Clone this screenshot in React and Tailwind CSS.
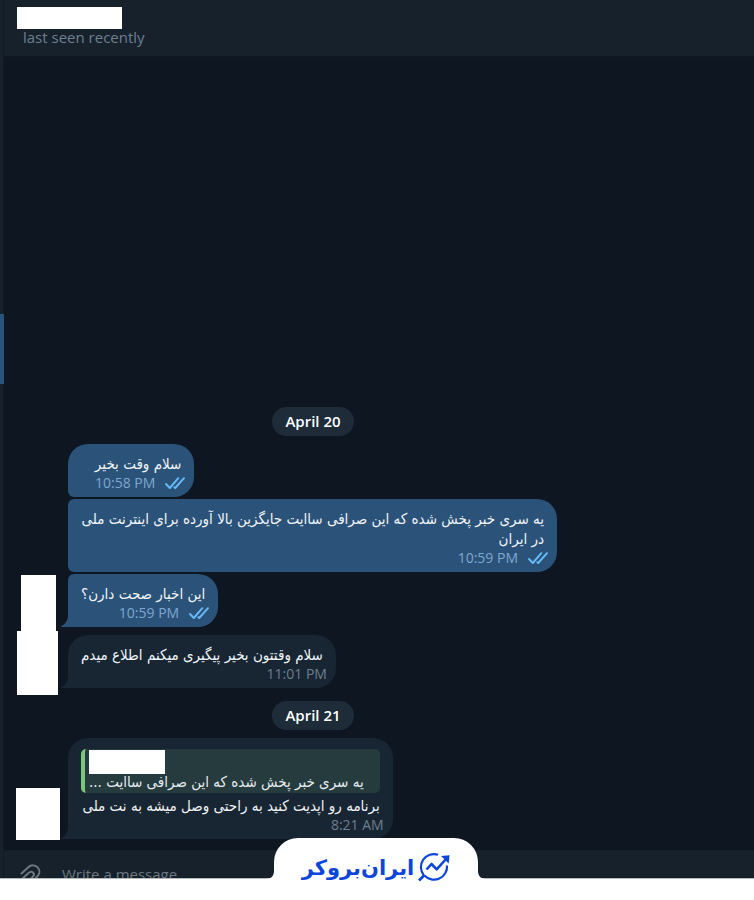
import clsx from 'clsx';

const THREAD = [
  { type: 'date', label: 'April 20', gap: 'mt-0' },
  { type: 'message', own: true, text: 'سلام وقت بخیر', time: '10:58 PM', first: true, gap: 'mt-2' },
  {
    type: 'message',
    own: true,
    text: 'یه سری خبر پخش شده که این صرافی ساایت جایگزین بالا آورده برای اینترنت ملی در ایران',
    time: '10:59 PM',
    gap: 'mt-[2px]',
  },
  {
    type: 'message',
    own: true,
    text: 'این اخبار صحت دارن؟',
    time: '10:59 PM',
    last: true,
    gap: 'mt-[2px]',
    avatar: 'left-[17px] top-[1px] w-[35px] h-14',
  },
  {
    type: 'message',
    text: 'سلام وقتتون بخیر پیگیری میکنم اطلاع میدم',
    time: '11:01 PM',
    first: true,
    last: true,
    gap: 'mt-2',
    avatar: 'left-[13px] -top-1 w-[41px] h-16',
  },
  { type: 'date', label: 'April 21', gap: 'mt-[13px]' },
  {
    type: 'message',
    reply: 'یه سری خبر پخش شده که این صرافی ساایت ...',
    text: 'برنامه رو اپدیت کنید به راحتی وصل میشه به نت ملی',
    time: '8:21 AM',
    first: true,
    last: true,
    gap: 'mt-2',
    avatar: 'left-3 top-[50px] w-11 h-[52px]',
  },
];

export default function App() {
  return (
    <div className="flex flex-col min-h-screen bg-[#0e1621] font-['Open_Sans','DejaVu_Sans',sans-serif] text-[15px]">
      <div className="flex flex-1">
        <ChatListEdge />
        <div className="flex-1 flex flex-col min-w-0">
          <Header />
          <main className="flex-1 flex flex-col justify-end pb-[11px]">
            <div className="w-full max-w-[618px]">
              {THREAD.map((item, i) =>
                item.type === 'date' ? <DateChip key={i} {...item} /> : <Message key={i} {...item} />
              )}
            </div>
          </main>
          <Composer />
        </div>
      </div>
      <BrandFooter />
    </div>
  );
}

// Visible sliver of the chat list, with the active chat highlighted
function ChatListEdge() {
  return (
    <div className="w-1 bg-[#17212b] border-r border-[#101a24]">
      <div className="h-[70px] mt-[314px] w-1 bg-[#2b5278]" />
    </div>
  );
}

function Header() {
  return (
    <header className="h-[57px] bg-[#17212b] pl-[13px] pt-[7px] border-b border-[#101922]">
      <div className="w-[105px] h-[22px] bg-white" />
      <p className="pl-[6px] leading-4 text-[#6d7f8f]">last seen recently</p>
    </header>
  );
}

function DateChip({ label, gap }) {
  return (
    <div className={clsx('flex justify-center', gap)}>
      <span className="rounded-full bg-[#1e2c3a] px-[13px] h-[29px] leading-[28px] font-semibold text-white">
        {label}
      </span>
    </div>
  );
}

function Message({ own, text, time, reply, first, last, gap, avatar }) {
  return (
    <div className={clsx('relative flex pl-16', gap)}>
      {avatar && <div className={clsx('absolute z-10 bg-white', avatar)} />}
      <div
        className={clsx(
          'relative max-w-[489px] pt-[10px] pb-[5px] rounded-r-[20px]',
          own ? 'bg-[#2b5278]' : 'bg-[#182533]',
          first ? 'rounded-tl-[20px]' : 'rounded-tl-[6px]',
          !last && 'rounded-bl-[6px]'
        )}
      >
        {last && <Tail className={own ? 'text-[#2b5278]' : 'text-[#182533]'} />}
        {reply && (
          <div className="mx-[13px] mt-[1px] mb-[3px] h-11 rounded-[5px] bg-[#263b3e] border-l-4 border-[#7bc87a] pl-1">
            <div className="w-[76px] h-6 translate-y-[1px] bg-white" />
            <p dir="rtl" className="pr-4 font-['DejaVu_Sans_Condensed','DejaVu_Sans',sans-serif] text-[15px]/[18px] text-[#e4ecf2] whitespace-nowrap">{reply}</p>
          </div>
        )}
        <p dir="rtl" className="px-[13px] font-['DejaVu_Sans_Condensed','DejaVu_Sans',sans-serif] text-[15px]/5 text-[#f0f4f8]">{text}</p>
        <div className="flex items-center justify-end gap-[10px] text-sm/[18px] pr-[9px] pl-[27px]">
          <time className={own ? 'text-[#7da8d3]' : 'text-[#6d7f8f]'}>{time}</time>
          {own && <ReadTicks />}
        </div>
      </div>
    </div>
  );
}

function Tail({ className }) {
  return (
    <svg className={clsx('absolute bottom-0 -left-[7px]', className)} width="8" height="14" viewBox="0 0 8 14" aria-hidden="true">
      <path d="M8 0H7v2C7 7.500 4 11.500.400 13c-.600.400-.300 1 .500 1H8z" fill="currentColor" />
    </svg>
  );
}

function ReadTicks() {
  return (
    <svg width="20" height="12" viewBox="0 0 20 12" fill="none" stroke="#65b9f4" strokeWidth="2" strokeLinecap="round" strokeLinejoin="round" aria-hidden="true">
      <path d="M1 7l3.800 4L13.300 1.200" />
      <path d="M9.300 10.300l.9.700L19 1.200" />
    </svg>
  );
}

function Composer() {
  return (
    <div className="h-7 overflow-hidden bg-[#17212b] border-t border-[#141e27]">
      <div className="flex items-start pl-3 pt-[13px]">
        <button type="button" aria-label="Attach" className="text-[#6d7883]">
          <svg width="26" height="24" viewBox="0 0 26 24" fill="none" stroke="currentColor" strokeWidth="2" strokeLinecap="round" aria-hidden="true">
            <path d="M5.500 9.500L12 3.400c3-2.800 7-2.600 9.600 0 2.600 2.700 2.300 6.400-.3 9L13 20.500M5.500 15.500L12.500 9c1.700-1.500 3.500-1.500 4.600-.3 1.200 1.300.8 3-.4 4.200L9 20" />
          </svg>
        </button>
        <input
          type="text"
          aria-label="Write a message"
          placeholder="Write a message..."
          className="flex-1 min-w-0 ml-5 h-5 bg-transparent outline-none text-white placeholder:text-[#6d7883]"
        />
      </div>
    </div>
  );
}

function BrandFooter() {
  return (
    <footer className="relative h-[22px] bg-white border-t border-[#b5babd]">
      <div className="absolute z-20 bottom-0 left-[274px] w-[204px] h-[62px] rounded-t-[24px] bg-white">
        <Fillet className="-left-[8px]" />
        <Fillet className="-right-[8px] -scale-x-100" />
        <a href="#" className="flex items-center justify-center gap-1 pt-[14px] text-[#0b45dc]">
          <span dir="rtl" className="text-[21px] leading-[30px] font-bold whitespace-nowrap">ایران‌بروکر</span>
          <BrandMark />
        </a>
      </div>
    </footer>
  );
}

function Fillet({ className }) {
  return (
    <svg className={clsx('absolute bottom-[21px]', className)} width="8" height="8" viewBox="0 0 8 8" aria-hidden="true">
      <path d="M8 0v8H0c5 0 8-3 8-8z" fill="#fff" />
    </svg>
  );
}

function BrandMark() {
  return (
    <svg width="32" height="30" viewBox="0 0 32 30" fill="none" stroke="currentColor" strokeWidth="2.200" aria-hidden="true">
      <path d="M20 2.700A13 13 0 0 0 5.800 23.200" />
      <path d="M29 13.500A13 13 0 0 1 6.500 23.500" />
      <path d="M1 28.500l5.500-5.500" strokeWidth="2.600" />
      <path d="M8.500 17.500l5-5.500 5.200 5.400L28 7" strokeWidth="2.600" strokeLinejoin="round" />
      <path d="M23 4l8.500-.7-.8 8.200z" fill="currentColor" stroke="none" />
    </svg>
  );
}
